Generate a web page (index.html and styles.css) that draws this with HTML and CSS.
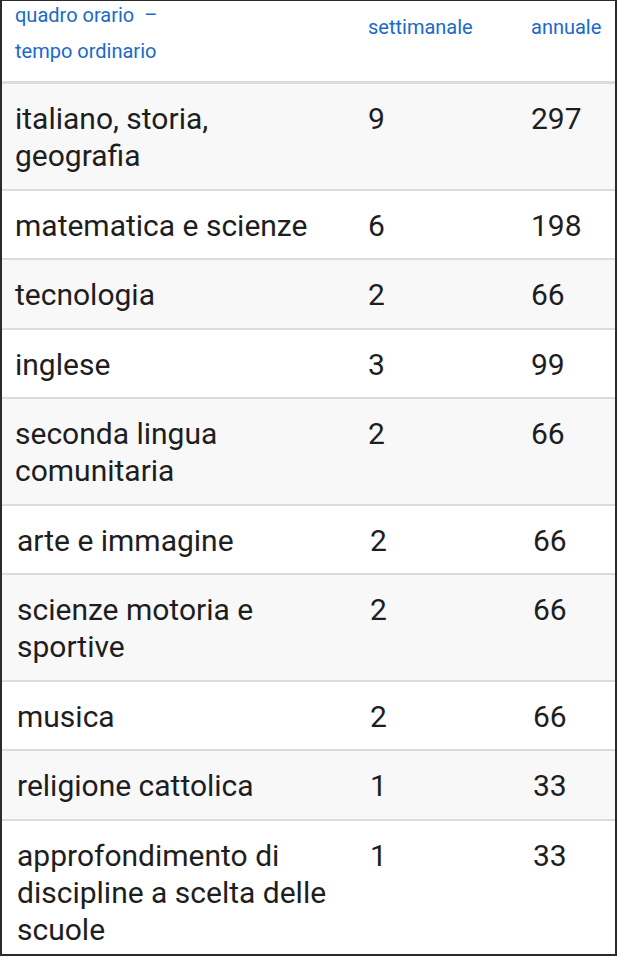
FILE: index.html
```html
<!DOCTYPE html>
<html lang="it">
<head>
<meta charset="utf-8">
<title>Quadro orario</title>
<link rel="stylesheet" href="styles.css">
</head>
<body>
<div class="frame">
  <table class="orario">
    <colgroup>
      <col class="c1"><col class="c2"><col class="c3">
    </colgroup>
    <thead>
      <tr>
        <th class="h-first"><div class="h-lines">quadro orario &nbsp;–<br>tempo ordinario</div></th>
        <th><div class="h-line">settimanale</div></th>
        <th><div class="h-line">annuale</div></th>
      </tr>
    </thead>
    <tbody>
      <tr class="alt"><td>italiano, storia, geografia</td><td>9</td><td>297</td></tr>
      <tr><td>matematica e scienze</td><td>6</td><td>198</td></tr>
      <tr class="alt"><td>tecnologia</td><td>2</td><td>66</td></tr>
      <tr><td>inglese</td><td>3</td><td>99</td></tr>
      <tr class="alt"><td>seconda lingua comunitaria</td><td>2</td><td>66</td></tr>
      <tr class="shift"><td>arte e immagine</td><td>2</td><td>66</td></tr>
      <tr class="alt shift"><td>scienze motoria e sportive</td><td>2</td><td>66</td></tr>
      <tr class="shift"><td>musica</td><td>2</td><td>66</td></tr>
      <tr class="alt shift"><td>religione cattolica</td><td>1</td><td>33</td></tr>
      <tr class="shift"><td>approfondimento di discipline a scelta delle scuole</td><td>1</td><td>33</td></tr>
    </tbody>
  </table>
</div>
</body>
</html>
```
FILE: styles.css
```css
html, body {
  margin: 0;
  padding: 0;
  background: #ffffff;
}

.frame {
  box-sizing: border-box;
  width: 617px;
  height: 956px;
  border: 2px solid #2b2b2b;
  border-top-width: 1px;
  overflow: hidden;
  background: #ffffff;
}

.orario {
  width: 613px;
  border-collapse: collapse;
  table-layout: fixed;
  font-family: Roboto, "Liberation Sans", sans-serif;
}

.c1 { width: 353px; }
.c2 { width: 163px; }
.c3 { width: 97px; }

.orario th {
  height: 80px;
  padding: 0 0 0 13px;
  text-align: left;
  vertical-align: top;
  font-weight: 400;
  font-size: 20px;
  color: #1a6ac8;
  border-bottom: 3px solid #dcdcdc;
}

.h-lines {
  line-height: 36px;
  margin-top: -4px;
}

.h-line {
  line-height: 36px;
  padding-top: 8px;
}

.orario td {
  padding: 16px 0 14.5px 13px;
  vertical-align: top;
  font-size: 30px;
  line-height: 37px;
  color: #1e1e1e;
  border-top: 2px solid #dcdcdc;
}

.orario td:first-child {
  padding-right: 26px;
}

.orario tbody tr:first-child td {
  border-top: 0;
}

.orario tr.alt td {
  background: #f8f8f8;
}

.orario tr.shift td {
  padding-left: 15px;
}
```
